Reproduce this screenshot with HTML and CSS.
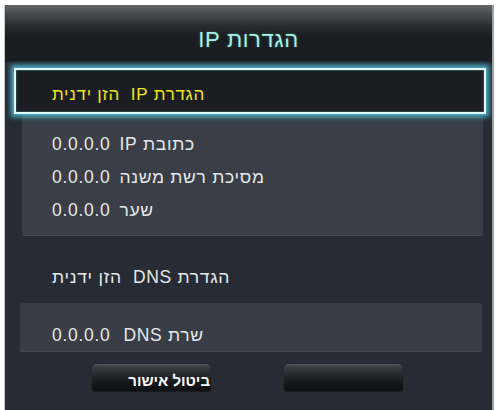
FILE: index.html
```html
<!DOCTYPE html>
<html lang="he">
<head>
<meta charset="utf-8">
<title>הגדרות IP</title>
<link rel="stylesheet" href="styles.css">
</head>
<body>
<div class="panel" dir="rtl">
  <div class="header"><div class="title">הגדרות IP</div></div>
  <div class="selected"><span class="sel-text">הגדרת IP&nbsp; הזן ידנית</span></div>
  <div class="group">
    <div class="row"><bdi>כתובת IP</bdi><span class="gap"></span><bdi>0.0.0.0</bdi></div>
    <div class="row"><bdi>מסיכת רשת משנה</bdi><span class="gap"></span><bdi>0.0.0.0</bdi></div>
    <div class="row"><bdi>שער</bdi><span class="gap"></span><bdi>0.0.0.0</bdi></div>
  </div>
  <div class="row plain">הגדרת DNS&nbsp; הזן ידנית</div>
  <div class="group dns">
    <div class="row"><bdi>שרת DNS</bdi><span class="gap wide"></span><bdi>0.0.0.0</bdi></div>
  </div>
  <div class="buttons">
    <div class="btn">ביטול אישור</div>
    <div class="btn"></div>
  </div>
</div>
</body>
</html>
```
FILE: styles.css
```css
html, body {
  margin: 0;
  padding: 0;
  background: #ffffff;
}
body {
  width: 498px;
  height: 410px;
  overflow: hidden;
  font-family: "Liberation Sans", Arial, sans-serif;
}
.panel {
  margin: 5px 0 0 4px;
  width: 487px;
  height: 405px;
  border-left: 1px solid #c4c7cb;
  border-right: 2px solid #9ea2a7;
  background: #272c34;
  overflow: hidden;
}
.header {
  height: 57px;
  background: linear-gradient(to bottom, #636568 0px, #45474b 10px, #26292e 22px, #191c20 32px, #1a1d22 57px);
  text-align: center;
}
.title {
  padding-top: 22px;
  line-height: 26px;
  font-size: 22px;
  color: #a6f2e6;
  letter-spacing: 0.6px;
  text-shadow: 0 0 3px rgba(120, 230, 220, 0.35);
}
.selected {
  position: relative;
  z-index: 1;
  margin: 6px 6px 0 9px;
  height: 42px;
  border: 2px solid #e4fbff;
  background: #1b1d23;
  box-shadow: 0 0 5px 3px rgba(80, 200, 230, 0.85), inset 0 0 2px rgba(120, 220, 240, 0.6);
  text-align: left;
  box-sizing: content-box;
}
.sel-text {
  display: block;
  padding: 14px 36px 0 36px;
  line-height: 22px;
  font-size: 17px;
  color: #efe51a;
  letter-spacing: 0.7px;
}
.group {
  margin: 0 9px 0 17px;
  padding: 14px 30px 8px 30px;
  background: #393e47;
  border-radius: 0 0 3px 3px;
  box-shadow: 0 1px 0 #444a53;
  text-align: left;
}
.row {
  line-height: 33px;
  font-size: 17.5px;
  color: #e6e8ea;
  letter-spacing: 0.7px;
  white-space: nowrap;
}
.gap {
  display: inline-block;
  width: 9px;
}
.gap.wide {
  width: 13px;
}
.plain {
  margin-top: 26px;
  padding: 0 47px;
  text-align: left;
}
.dns {
  margin: 9px 10px 0 15px;
  height: 32px;
  padding: 16px 32px 0 32px;
  overflow: hidden;
  border-radius: 2px;
  background: #383d46;
}
.buttons {
  margin-top: 13px;
  display: flex;
  flex-direction: row-reverse;
  justify-content: center;
  gap: 73px;
  padding-right: 2px;
}
.btn {
  width: 119px;
  height: 27px;
  box-sizing: border-box;
  padding: 7px 1px 0 0;
  border-radius: 5px 5px 2px 2px;
  background: linear-gradient(to bottom, #54575c 0px, #3a3d42 3px, #24272b 11px, #141619 20px, #0e1013 27px);
  box-shadow: 0 1px 1px rgba(0, 0, 0, 0.4);
  color: #ffffff;
  font-weight: bold;
  font-size: 15px;
  line-height: 20px;
  text-align: right;
  white-space: nowrap;
}
```
